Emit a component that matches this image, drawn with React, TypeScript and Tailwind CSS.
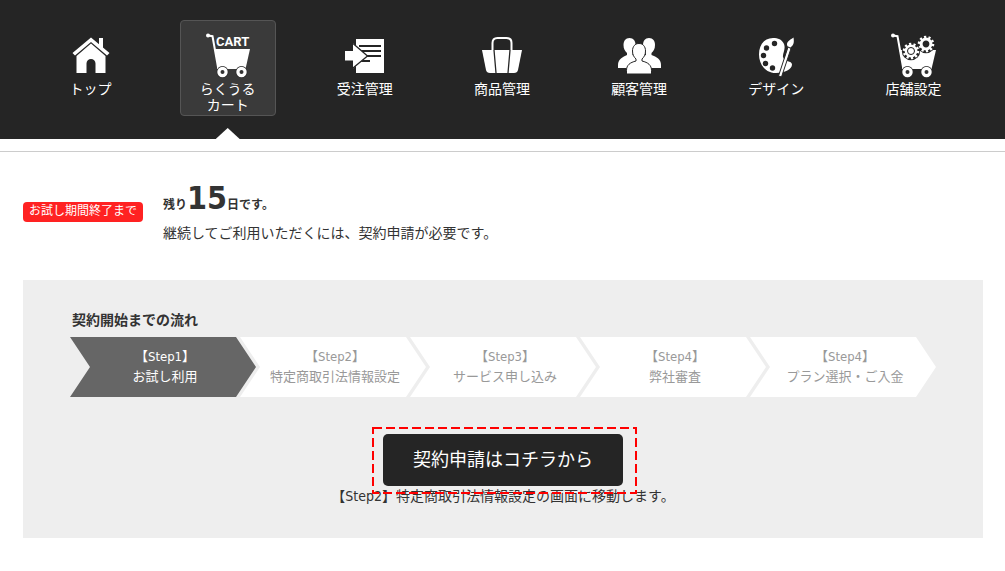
import type { ReactNode } from 'react';
import clsx from 'clsx';

interface NavItem {
  label: string[];
  icon: ReactNode;
  active?: boolean;
}

interface Step {
  name: string;
  text: string;
  current?: boolean;
}

function HomeIcon() {
  return (
    <svg width="48" height="48" viewBox="0 0 48 48" fill="#fff" aria-hidden="true">
      <path d="M32 7h4v11l-4-4z" />
      <path d="M24 6.500L42.500 22L40 24.500L24 11L8 24.500L5.500 22z" />
      <path d="M24 12.500L38.500 25V42H28.500V32.500a4.500 4.500 0 0 0-9 0V42H9.500V25z" />
    </svg>
  );
}

function CartWheels() {
  return (
    <>
      <path d="M13 37H37" stroke="#fff" strokeWidth="2" />
      <circle cx="18.500" cy="41" r="6" fill="#2c2c2c" />
      <circle cx="37.500" cy="41" r="6" fill="#2c2c2c" />
      <circle cx="18.500" cy="41" r="3.600" fill="#333" stroke="#fff" strokeWidth="3.200" />
      <circle cx="37.500" cy="41" r="3.600" fill="#333" stroke="#fff" strokeWidth="3.200" />
    </>
  );
}

function CartIcon() {
  return (
    <svg width="48" height="48" viewBox="0 0 48 48" className="overflow-visible" aria-hidden="true">
      <path d="M4 4.500L8.500 5.200L14 36" fill="none" stroke="#fff" strokeWidth="2" />
      <circle cx="4" cy="4.500" r="2" fill="#fff" />
      <path d="M10.500 18H46L41.500 38H14.500z" fill="#fff" />
      <text x="12" y="15" className="fill-white font-[Roboto,sans-serif] text-[13px] font-bold">
        CART
      </text>
      <CartWheels />
    </svg>
  );
}

function OrderIcon() {
  return (
    <svg width="48" height="48" viewBox="0 0 48 48" aria-hidden="true">
      <path d="M15 8h28v34H15z" fill="#fff" />
      <path d="M18 15h22M18 20h22M22 25h18M18 30h11" stroke="#252525" strokeWidth="2" />
      <path d="M4 20h8v-8L26.500 25L12 37.500V29.500H4z" fill="#fff" />
      <path d="M12 12.500L26.500 25L12 37" fill="none" stroke="#252525" strokeWidth="1.300" />
    </svg>
  );
}

function BagIcon() {
  return (
    <svg width="48" height="48" viewBox="0 0 48 48" aria-hidden="true">
      <path d="M14.500 20V12q0-5 5-5h9q5 0 5 5v8" fill="none" stroke="#fff" strokeWidth="2" />
      <path d="M4 19H44L40 39q-.700 3-4 3H12q-3.300 0-4-3z" fill="#fff" />
      <path d="M16 19L18 42M32 19L30 42" stroke="#252525" strokeWidth="1.300" />
    </svg>
  );
}

function PeopleIcon() {
  return (
    <svg width="48" height="48" viewBox="0 0 48 48" fill="#fff" aria-hidden="true">
      <path d="M14.500 7c4 0 6 3 6 7 0 4-1 6-3 8v2c5 2 9 3 9 8v5H3v-3c0-6 5-8 9-10v-2c-2-2-3.500-4-3.500-8 0-4 2-7 6-7z" />
      <path d="M34 7c4 0 6 3 6 7 0 4-1.500 6-3.500 8v2c5 2 9.500 4 9.500 10v3H23v-5c0-5 4-7 8-8v-2c-2-2-3-4-3-8 0-4 2-7 6-7z" />
      <path
        d="M24 12.500c4 0 6.500 3 6.500 7.500 0 4-1.500 6-3.500 8v2c6 1.500 9.500 4 9.500 9.500v3.500h-25V39.500c0-5.500 3.500-8 9.500-9.500v-2c-2-2-3.500-4-3.500-8 0-4.500 2.500-7.500 6.500-7.500z"
        stroke="#252525"
        strokeWidth="1"
      />
    </svg>
  );
}

function PaletteIcon() {
  return (
    <svg width="48" height="48" viewBox="0 0 48 48" aria-hidden="true">
      <path
        d="M21 7C12 7 7 14 7 23.500C7 33 13 42 24 42C33 42 40 38 40 33.500C40 29.500 32 31 31 26C30.500 22 34 18 32 13C30 8.500 26 7 21 7z"
        fill="#fff"
      />
      <g fill="#252525">
        <circle cx="22.500" cy="12.500" r="2.700" />
        <circle cx="14.500" cy="17" r="2.700" />
        <circle cx="11.500" cy="24.500" r="2.700" />
        <circle cx="13.500" cy="32.500" r="2.700" />
        <circle cx="20.500" cy="37" r="2.700" />
      </g>
      <path d="M36 16L39 17.500L29.500 46L26.500 45z" fill="#fff" stroke="#252525" strokeWidth="1" />
      <path d="M41.500 6.500C42 10 42.500 13.500 38.500 16.500L35.500 15.300C33.500 11 38 9 41.500 6.500z" fill="#fff" />
    </svg>
  );
}

function Gear({ cx, cy, filled }: { cx: number; cy: number; filled?: boolean }) {
  return (
    <g transform={`translate(${cx} ${cy})`}>
      <circle r="9.200" fill="#252525" />
      <circle r="7" fill="none" stroke="#fff" strokeWidth="2.600" strokeDasharray="2.200 2.200" />
      <circle r="4.900" fill="none" stroke="#fff" strokeWidth="3" />
      {filled && <circle r="3.500" fill="#fff" stroke="#252525" strokeWidth="1" />}
    </g>
  );
}

function ShopSettingIcon() {
  return (
    <svg width="48" height="48" viewBox="0 0 48 48" aria-hidden="true">
      <path d="M4 4.500L8.500 5.200L14 36" fill="none" stroke="#fff" strokeWidth="2" />
      <circle cx="4" cy="4.500" r="2" fill="#fff" />
      <path d="M10.500 19H47L42.500 38H14.500z" fill="#fff" />
      <Gear cx={37} cy={13} />
      <Gear cx={22} cy={20} filled />
      <CartWheels />
    </svg>
  );
}

const navItems: NavItem[] = [
  { label: ['トップ'], icon: <HomeIcon /> },
  { label: ['らくうる', 'カート'], icon: <CartIcon />, active: true },
  { label: ['受注管理'], icon: <OrderIcon /> },
  { label: ['商品管理'], icon: <BagIcon /> },
  { label: ['顧客管理'], icon: <PeopleIcon /> },
  { label: ['デザイン'], icon: <PaletteIcon /> },
  { label: ['店舗設定'], icon: <ShopSettingIcon /> },
];

const steps: Step[] = [
  { name: '【Step1】', text: 'お試し利用', current: true },
  { name: '【Step2】', text: '特定商取引法情報設定' },
  { name: '【Step3】', text: 'サービス申し込み' },
  { name: '【Step4】', text: '弊社審査' },
  { name: '【Step4】', text: 'プラン選択・ご入金' },
];

function GlobalNav() {
  return (
    <header className="border-b border-[#ccc] pb-3">
      <nav className="bg-[#252525] pl-[22px] pr-[23px]">
        <ul className="flex">
          {navItems.map((item) => (
            <li key={item.label[0]} className="relative flex flex-1 justify-center pt-5 pb-[23px]">
              <a
                href="#"
                className={clsx(
                  'flex h-24 w-24 flex-col items-center rounded border pt-[10px] text-center text-sm leading-4 text-white',
                  item.active ? 'border-[#555] bg-[#3a3a3a]' : 'border-transparent'
                )}
              >
                {item.icon}
                <span className="pt-[2px]">
                  {item.label.map((line) => (
                    <span key={line} className="block">{line}</span>
                  ))}
                </span>
              </a>
              {item.active && (
                <span className="absolute bottom-0 h-[11px] w-6 bg-white [clip-path:polygon(50%_0,100%_100%,0_100%)]" />
              )}
            </li>
          ))}
        </ul>
      </nav>
    </header>
  );
}

function StepFlow() {
  return (
    <ol className="flex">
      {steps.map((step, i) => (
        <li
          key={i}
          className={clsx(
            'flex-1 whitespace-nowrap py-[10px] pl-1 text-center text-[13px] leading-5',
            '[clip-path:polygon(0_0,calc(100%_-_20px)_0,100%_50%,calc(100%_-_20px)_100%,0_100%,20px_50%)]',
            i > 0 && '-ml-4',
            step.current ? 'bg-[#666] text-white' : 'bg-white text-[#999]'
          )}
        >
          <span className="block">{step.name}</span>
          <span className="block">{step.text}</span>
        </li>
      ))}
    </ol>
  );
}

export default function App() {
  return (
    <div className="min-h-screen bg-white font-['DejaVu_Sans_Condensed','Noto_Sans_CJK_JP',sans-serif] text-sm text-[#333]">
      <GlobalNav />

      <main className="pl-[23px] pr-[22px] pt-6">
        {/* Trial period */}
        <section className="flex items-start">
          <span className="mt-[26px] w-[120px] rounded bg-[#ff2222] pb-[2px] text-center text-xs leading-[18px] text-white">
            お試し期間終了まで
          </span>
          <div className="pt-1 pl-5">
            <p className="text-xs leading-9 font-bold">
              残り<strong className="text-[32px]">15</strong>日です。
            </p>
            <p className="leading-5">継続してご利用いただくには、契約申請が必要です。</p>
          </div>
        </section>

        {/* Contract flow */}
        <section className="mt-[37px] bg-[#eee] px-[47px] pt-[30px] pb-8">
          <h2 className="mb-[7px] pl-[2px] leading-5 font-bold">契約開始までの流れ</h2>
          <StepFlow />
          <div className="flex flex-col items-center pt-[37px]">
            <div className="relative">
              <button type="button" className="h-[52px] w-60 rounded-[5px] bg-[#252525] text-lg text-white">
                契約申請はコチラから
              </button>
              <svg
                className="pointer-events-none absolute -top-[7px] -left-[11px] z-10"
                width="265"
                height="67"
                fill="none"
                stroke="#f00"
                strokeWidth="2"
                strokeDasharray="9 4"
                aria-hidden="true"
              >
                <path d="M1 1H264V66H1z" />
              </svg>
            </div>
            <p className="leading-5">【Step2】特定商取引法情報設定の画面に移動します。</p>
          </div>
        </section>
      </main>
    </div>
  );
}
